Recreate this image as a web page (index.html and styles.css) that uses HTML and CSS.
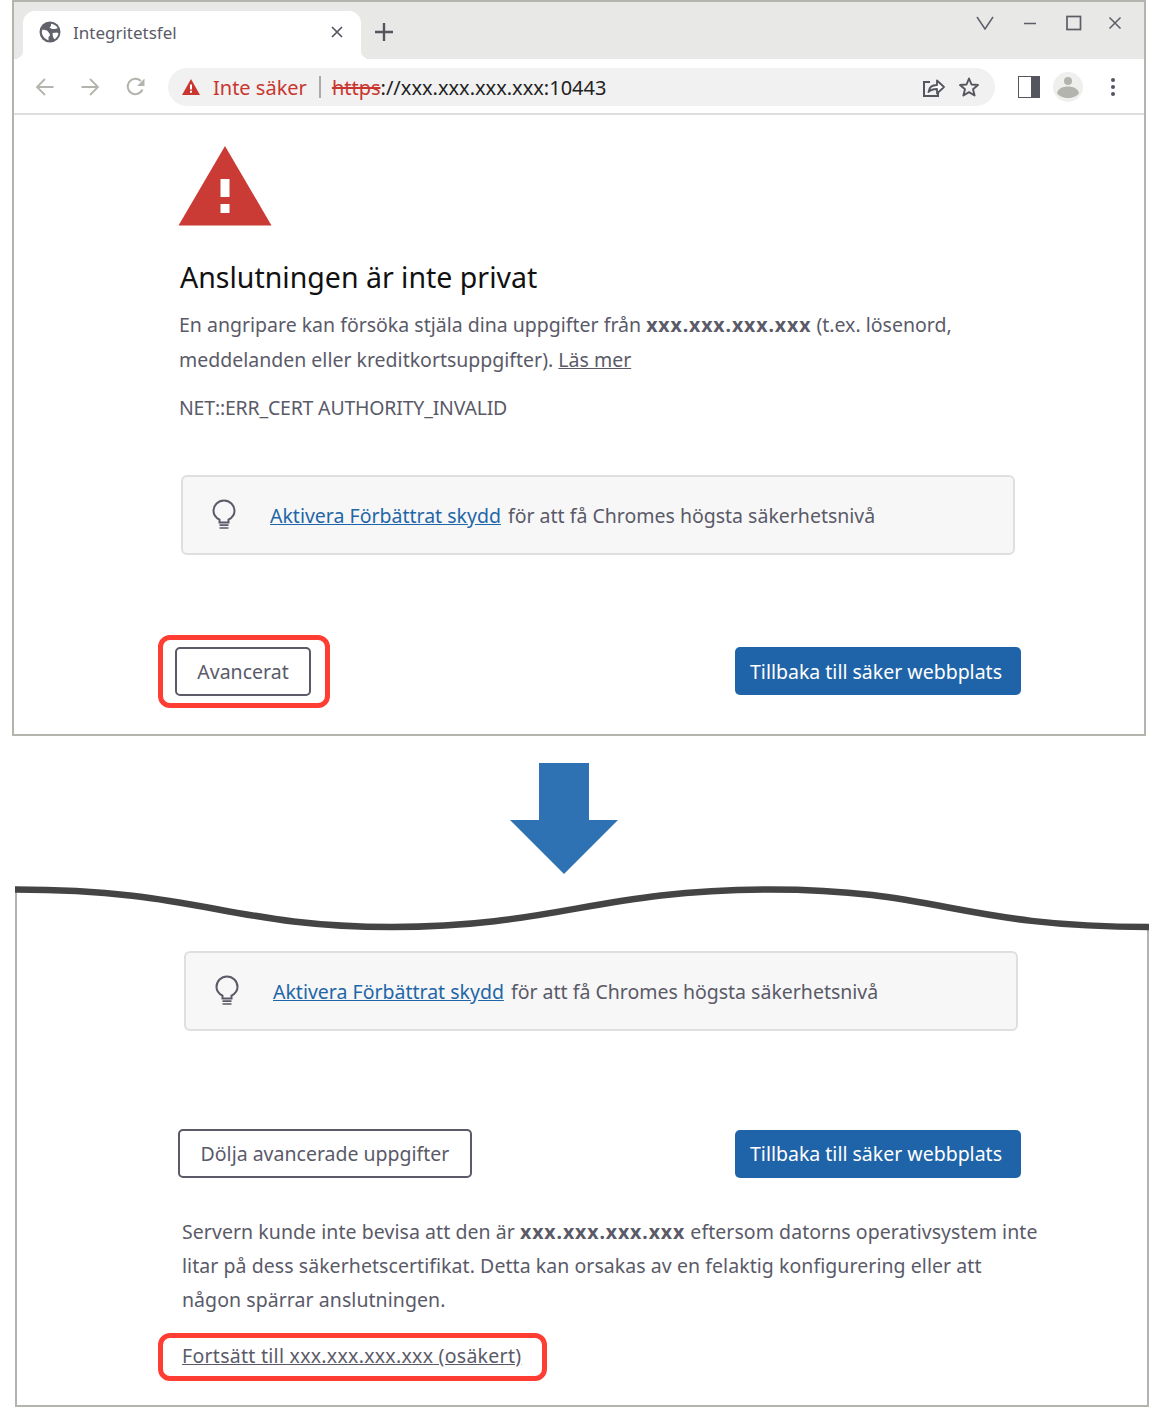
FILE: index.html
```html
<!DOCTYPE html>
<html lang="sv">
<head>
    <meta charset="UTF-8">
    <title>Integritetsfel</title>
    <link rel="stylesheet" href="styles.css">
</head>
<body>
    <!-- Webbläsarfönster -->
    <div class="window">
        <div class="tabstrip">
            <div class="tab">
                <svg class="favicon" width="22" height="22" viewBox="0 0 22 22">
                    <circle cx="11" cy="11" r="10.5" fill="#62626c"/>
                    <path d="M3.5 8.5l4.5 1 2.5 3 .5 2-1.5 1.5v3.5C6 18 3 15 2.8 11zM12 2.8c3 .3 5.500 2 6.800 4.500L16 8h-3l-2.500-1.500L12 5zM13.500 12l4.500-.5 1.500 1c-.5 2.500-2 4.500-4 5.700L14 16z" fill="#fff"/>
                </svg>
                <span class="tab-title">Integritetsfel</span>
                <svg class="tab-close" width="14" height="14" viewBox="0 0 14 14">
                    <path d="M2 2l10 10M12 2L2 12" stroke="#55555f" stroke-width="1.700"/>
                </svg>
            </div>
            <svg class="new-tab" width="22" height="22" viewBox="0 0 22 22">
                <path d="M11 2v18M2 11h18" stroke="#55555f" stroke-width="2.400"/>
            </svg>
            <div class="window-controls">
                <svg width="18" height="14" viewBox="0 0 18 14"><path d="M1 1l8 12 8-12" fill="none" stroke="#5d5d68" stroke-width="1.500"/></svg>
                <svg width="14" height="14" viewBox="0 0 14 14"><path d="M1 7.500h12" stroke="#5d5d68" stroke-width="1.500"/></svg>
                <svg width="16" height="16" viewBox="0 0 16 16"><rect x="1" y="1.500" width="13.500" height="13" fill="none" stroke="#5d5d68" stroke-width="1.700"/></svg>
                <svg class="close-window" width="14" height="14" viewBox="0 0 14 14"><path d="M1.500 1.500l11 11M12.500 1.500l-11 11" stroke="#5d5d68" stroke-width="1.500"/></svg>
            </div>
        </div>
        <div class="toolbar">
            <svg class="nav-icon" width="20" height="20" viewBox="0 0 20 20">
                <path d="M18.500 10H2M10 2l-8 8 8 8" fill="none" stroke="#b4b4ae" stroke-width="1.800"/>
            </svg>
            <svg class="nav-icon" width="20" height="20" viewBox="0 0 20 20">
                <path d="M1.500 10H18M10 2l8 8-8 8" fill="none" stroke="#b4b4ae" stroke-width="1.800"/>
            </svg>
            <svg class="nav-icon" width="22" height="22" viewBox="0 0 22 22">
                <path d="M17.500 13.500A7.700 7.700 0 1 1 15.800 5" fill="none" stroke="#b4b4ae" stroke-width="2"/>
                <path d="M19.500 2.500v7.500H12z" fill="#b4b4ae"/>
            </svg>
            <div class="omnibox">
                <svg width="18" height="16" viewBox="0 0 18 16">
                    <path d="M9 0l9 16H0z" fill="#c9362f"/>
                    <path d="M8 5.500h2v5H8zM8 11.800h2v2H8z" fill="#fff"/>
                </svg>
                <span class="not-secure">Inte säker</span>
                <span class="omni-sep"></span>
                <span class="url"><span class="scheme">https</span>://xxx.xxx.xxx.xxx:10443</span>
                <svg class="share" width="24" height="22" viewBox="0 0 24 22">
                    <path d="M8 6H2v14h14v-5" fill="none" stroke="#55555f" stroke-width="2"/>
                    <path d="M6.500 16c.5-4.500 4-7 8.500-7V4.500l7 6.500-7 6.500V13c-3.500 0-6.500 .8-8.500 3z" fill="#fff" stroke="#55555f" stroke-width="1.800" stroke-linejoin="round"/>
                </svg>
                <svg class="star" width="22" height="22" viewBox="0 0 22 22">
                    <path d="M11 2.500l2.500 6 6.500 .5-5 4.200 1.600 6.300-5.600-3.400-5.600 3.400 1.600-6.300-5-4.200 6.500-.5z" fill="none" stroke="#55555f" stroke-width="1.900" stroke-linejoin="round"/>
                </svg>
            </div>
            <div class="side-panel"><span></span></div>
            <svg class="avatar" width="30" height="30" viewBox="0 0 30 30">
                <circle cx="15" cy="15" r="15" fill="#efefed"/>
                <circle cx="15" cy="9" r="4" fill="#b4b4ae"/>
                <path d="M4 21c1-4.500 6-6.500 11-6.500s10 2 11 6.500c-2 3.500-6.500 5-11 5s-9-1.500-11-5z" fill="#b4b4ae"/>
            </svg>
            <svg class="menu-dots" width="6" height="20" viewBox="0 0 6 20">
                <circle cx="3" cy="3" r="2" fill="#55555f"/>
                <circle cx="3" cy="10" r="2" fill="#55555f"/>
                <circle cx="3" cy="17" r="2" fill="#55555f"/>
            </svg>
        </div>

        <div class="page">
            <svg class="big-warning" width="94" height="80" viewBox="0 0 94 80">
                <path d="M47 0l46.500 79.500H.5z" fill="#cb3b35"/>
                <path d="M42.500 33h9v18h-9zM42.500 58h9v9h-9z" fill="#fff"/>
            </svg>
            <h1>Anslutningen är inte privat</h1>
            <p class="text">En angripare kan försöka stjäla dina uppgifter från <b>xxx.xxx.xxx.xxx</b> (t.ex. lösenord,<br>meddelanden eller kreditkortsuppgifter). <a class="plain-link" href="#">Läs mer</a></p>
            <p class="text error-code">NET::ERR_CERT AUTHORITY_INVALID</p>
            <div class="protect-card first-card">
                <svg class="bulb" width="26" height="32" viewBox="0 0 26 32">
                    <path d="M8.500 23.500v-2.800C5 18.800 2.500 16 2.500 12a10.500 10.500 0 0 1 21 0c0 4-2.500 6.800-6 8.700v2.800z" fill="none" stroke="#5a5a68" stroke-width="2"/>
                    <path d="M8.500 26.200h9M8.500 29h9" stroke="#5a5a68" stroke-width="1.700"/>
                </svg>
                <span><a class="blue-link" href="#">Aktivera Förbättrat skydd</a> för att få Chromes högsta säkerhetsnivå</span>
            </div>
            <div class="button-row">
                <div class="highlight">
                    <button class="btn-outline btn-advanced">Avancerat</button>
                </div>
                <button class="btn-blue">Tillbaka till säker webbplats</button>
            </div>
        </div>
    </div>

    <svg class="down-arrow" width="108" height="111" viewBox="0 0 108 111">
        <path d="M29 0h50v57h29L54 111 0 57h29z" fill="#2e72b3"/>
    </svg>

    <!-- Avklippt nedre del -->
    <svg class="cut-edge" width="1134" height="48" viewBox="0 0 1134 48">
        <path d="M1 6v42M1133 44v4" stroke="#b4b4ae" stroke-width="2"/>
        <path d="M0 5.500C185 5.500 215 43 377 43S585 5.500 755 5.500 945 43 1134 43" fill="none" stroke="#444" stroke-width="6.500"/>
    </svg>
    <div class="window-lower">
        <div class="protect-card second-card">
            <svg class="bulb" width="26" height="32" viewBox="0 0 26 32">
                <path d="M8.500 23.500v-2.800C5 18.800 2.500 16 2.500 12a10.500 10.500 0 0 1 21 0c0 4-2.500 6.800-6 8.700v2.800z" fill="none" stroke="#5a5a68" stroke-width="2"/>
                <path d="M8.500 26.200h9M8.500 29h9" stroke="#5a5a68" stroke-width="1.700"/>
            </svg>
            <span><a class="blue-link" href="#">Aktivera Förbättrat skydd</a> för att få Chromes högsta säkerhetsnivå</span>
        </div>
        <div class="button-row lower-row">
            <button class="btn-outline btn-hide">Dölja avancerade uppgifter</button>
            <button class="btn-blue">Tillbaka till säker webbplats</button>
        </div>
        <p class="text details">Servern kunde inte bevisa att den är <b>xxx.xxx.xxx.xxx</b> eftersom datorns operativsystem inte<br>litar på dess säkerhetscertifikat. Detta kan orsakas av en felaktig konfigurering eller att<br>någon spärrar anslutningen.</p>
        <div class="highlight proceed">
            <a class="plain-link" href="#">Fortsätt till xxx.xxx.xxx.xxx (osäkert)</a>
        </div>
    </div>
</body>
</html>
```
FILE: styles.css
```css
body {
    margin: 0;
    background: white;
    font-family: "Noto Sans", "Noto Sans CJK JP", sans-serif;
    color: #5a5a68;
}

svg {
    display: block;
    flex-shrink: 0;
}

.window {
    width: 1134px;
    margin-left: 12px;
    border: 2px solid #b4b4ae;
    box-sizing: border-box;
}

.tabstrip {
    display: flex;
    align-items: flex-start;
    height: 57px;
    box-sizing: border-box;
    padding: 9px 0 0 9px;
    background: #e8e8e6;
}

.tab {
    position: relative;
    display: flex;
    align-items: center;
    width: 338px;
    height: 48px;
    box-sizing: border-box;
    padding: 0 0 6px 16px;
    background: white;
    border-radius: 12px 12px 0 0;
}

.tab::before,
.tab::after {
    content: "";
    position: absolute;
    bottom: 0;
    width: 9px;
    height: 9px;
}

.tab::before {
    left: -9px;
    background: radial-gradient(circle at 0 0, transparent 9px, white 9.5px);
}

.tab::after {
    right: -9px;
    background: radial-gradient(circle at 100% 0, transparent 9px, white 9.5px);
}

.favicon {
    margin-right: 12px;
}

.tab-title {
    flex: 1;
    font-size: 17px;
    color: #5a5a68;
}

.tab-close {
    margin-right: 17px;
}

.new-tab {
    margin: 10px 0 0 12px;
}

.window-controls {
    display: flex;
    align-items: center;
    gap: 29px;
    margin: 4px 22px 0 auto;
}

.close-window {
    margin-left: -3px;
}

.toolbar {
    display: flex;
    align-items: center;
    height: 56px;
    box-sizing: border-box;
    padding: 2px 0 0 21px;
    border-bottom: 2px solid #dedede;
}

.nav-icon {
    margin-right: 25px;
}

.omnibox {
    display: flex;
    align-items: center;
    width: 827px;
    height: 38px;
    box-sizing: border-box;
    margin-left: -4px;
    padding: 0 15px 0 14px;
    background: #f1f1f1;
    border-radius: 19px;
    font-size: 20px;
}

.not-secure {
    margin-left: 13px;
    color: #c9362f;
}

.omni-sep {
    width: 2px;
    height: 22px;
    margin: 0 11px 0 12px;
    background: #aaaaaa;
}

.url {
    flex: 1;
    color: #222;
}

.scheme {
    color: #c9362f;
    text-decoration: line-through;
}

.share {
    margin-right: 12px;
}

.side-panel {
    width: 20px;
    height: 20px;
    margin-left: 23px;
    background: #55555f;
    border: 1px solid #55555f;
}

.side-panel span {
    display: block;
    width: 12px;
    height: 20px;
    background: white;
}

.avatar {
    margin-left: 13px;
}

.menu-dots {
    margin-left: 27px;
}

.page {
    padding: 31px 123px 26px 165px;
}

.big-warning {
    margin-left: -1px;
}

h1 {
    margin: 31px 0 0 1px;
    font-size: 28.500px;
    font-weight: normal;
    line-height: 40px;
    color: #111;
}

.text {
    margin: 10px 0 0;
    font-size: 19.500px;
    line-height: 35px;
}

.text b {
    letter-spacing: 0.900px;
}

.error-code {
    margin-top: 13px;
    letter-spacing: -0.200px;
}

.plain-link {
    color: #5a5a68;
}

.blue-link {
    margin-right: 2px;
    color: #1f66a8;
}

.protect-card {
    display: flex;
    align-items: center;
    gap: 33px;
    width: 834px;
    height: 80px;
    box-sizing: border-box;
    padding: 0 0 0 28px;
    background: #f7f7f7;
    border: 2px solid #dfdfdf;
    border-radius: 6px;
    font-size: 19.500px;
}

.first-card {
    margin: 50px 0 0 2px;
}

.second-card {
    margin: 0 0 0 167px;
}

.button-row {
    display: flex;
    align-items: center;
    justify-content: space-between;
}

.page .button-row {
    margin: 80px 0 0 -21px;
}

.page .btn-blue {
    margin-bottom: 1px;
}

.highlight {
    border: 5px solid #ff3d32;
    border-radius: 12px;
    box-sizing: border-box;
}

.page .highlight {
    padding: 7px 14px 7px 12px;
}

button {
    height: 48px;
    box-sizing: border-box;
    border-radius: 5px;
    font-family: inherit;
    font-size: 19.500px;
}

.btn-outline {
    background: white;
    border: 2px solid #5a5a68;
    color: #5a5a68;
}

.btn-advanced {
    display: block;
    width: 136px;
    height: 49px;
    padding: 0;
}

.btn-hide {
    width: 294px;
    height: 49px;
    padding: 0;
}

.btn-blue {
    width: 286px;
    padding: 0 4px 0 0;
    background: #1f63a8;
    border: none;
    color: white;
}

.down-arrow {
    margin: 27px 0 0 510px;
}

.cut-edge {
    margin: 10px 0 0 15px;
}

.window-lower {
    width: 1134px;
    margin-left: 15px;
    box-sizing: border-box;
    padding: 19px 126px 24px 0;
    border: 2px solid #b4b4ae;
    border-top: none;
}

.lower-row {
    margin: 98px 0 0 161px;
}

.details {
    margin: 37px 0 0 165px;
    line-height: 34px;
    letter-spacing: 0.060px;
    white-space: nowrap;
}

.proceed {
    display: flex;
    align-items: center;
    width: 389px;
    height: 48px;
    box-sizing: border-box;
    margin: 16px 0 0 141px;
    padding: 0 0 4px 19px;
    font-size: 19.500px;
    letter-spacing: 0.280px;
}
```
